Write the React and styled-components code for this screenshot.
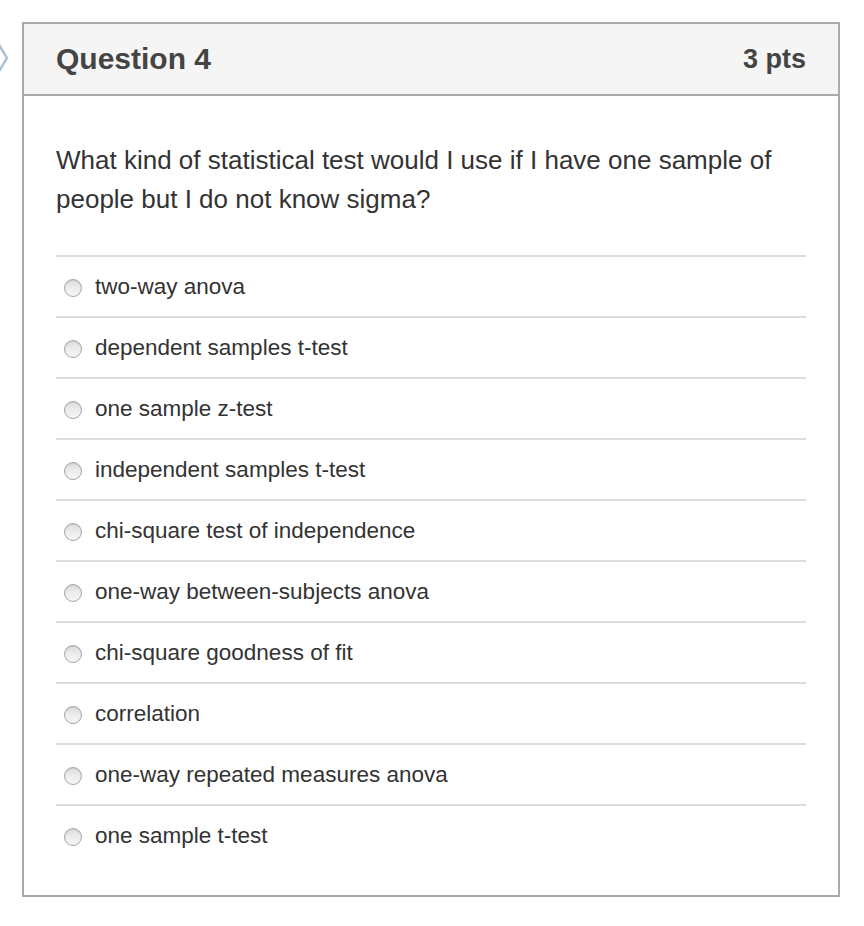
import React from "react";
import styled, { createGlobalStyle } from "styled-components";

const GlobalStyle = createGlobalStyle`
  body {
    margin: 0;
    background: #ffffff;
    font-family: "Liberation Sans", Arial, sans-serif;
  }
`;

const Page = styled.div`
  position: relative;
  width: 864px;
  height: 926px;
  padding: 22px 0 0 22px;
  box-sizing: border-box;
`;

const Chevron = styled.svg`
  position: absolute;
  left: -3px;
  top: 41px;
  width: 14px;
  height: 34px;
`;

const QuestionBox = styled.div`
  width: 818px;
  height: 875px;
  box-sizing: border-box;
  border: 2px solid #aaaaaa;
  background: #ffffff;
`;

const Header = styled.div`
  display: flex;
  justify-content: space-between;
  align-items: center;
  height: 70px;
  padding: 0 32px;
  background: #f5f5f5;
  border-bottom: 2px solid #aaaaaa;
  color: #444444;
`;

const Title = styled.h2`
  margin: 0;
  font-size: 30px;
  font-weight: bold;
`;

const Points = styled.span`
  font-size: 27px;
  font-weight: bold;
`;

const Body = styled.div`
  padding: 45px 32px 0 32px;
`;

const QuestionText = styled.p`
  margin: 0 0 36px 0;
  font-size: 26px;
  line-height: 39px;
  color: #333333;
`;

const Answers = styled.div`
  display: flex;
  flex-direction: column;
`;

const AnswerRow = styled.label`
  display: flex;
  align-items: center;
  gap: 13px;
  height: 59px;
  padding-left: 8px;
  border-top: 2px solid #dddddd;
  font-size: 22.5px;
  color: #333333;
`;

const Radio = styled.span`
  width: 16px;
  height: 16px;
  margin-top: 2px;
  border-radius: 50%;
  border: 1px solid #a6a6a6;
  background: linear-gradient(180deg, #dcdcdc 0%, #ececec 50%, #f6f6f6 100%);
  box-shadow: inset 0 1px 1px rgba(0, 0, 0, 0.08);
  flex-shrink: 0;
`;

const answers = [
  "two-way anova",
  "dependent samples t-test",
  "one sample z-test",
  "independent samples t-test",
  "chi-square test of independence",
  "one-way between-subjects anova",
  "chi-square goodness of fit",
  "correlation",
  "one-way repeated measures anova",
  "one sample t-test",
];

export default function App() {
  return (
    <>
      <GlobalStyle />
      <Page>
        <Chevron viewBox="0 0 14 34">
          <path
            d="M1 2 L10 17 L1 32"
            fill="none"
            stroke="#a9c3d8"
            strokeWidth="2.5"
          />
        </Chevron>
        <QuestionBox>
          <Header>
            <Title>Question 4</Title>
            <Points>3 pts</Points>
          </Header>
          <Body>
            <QuestionText>
              What kind of statistical test would I use if I have one sample of
              people but I do not know sigma?
            </QuestionText>
            <Answers>
              {answers.map((a) => (
                <AnswerRow key={a}>
                  <Radio />
                  <span>{a}</span>
                </AnswerRow>
              ))}
            </Answers>
          </Body>
        </QuestionBox>
      </Page>
    </>
  );
}
